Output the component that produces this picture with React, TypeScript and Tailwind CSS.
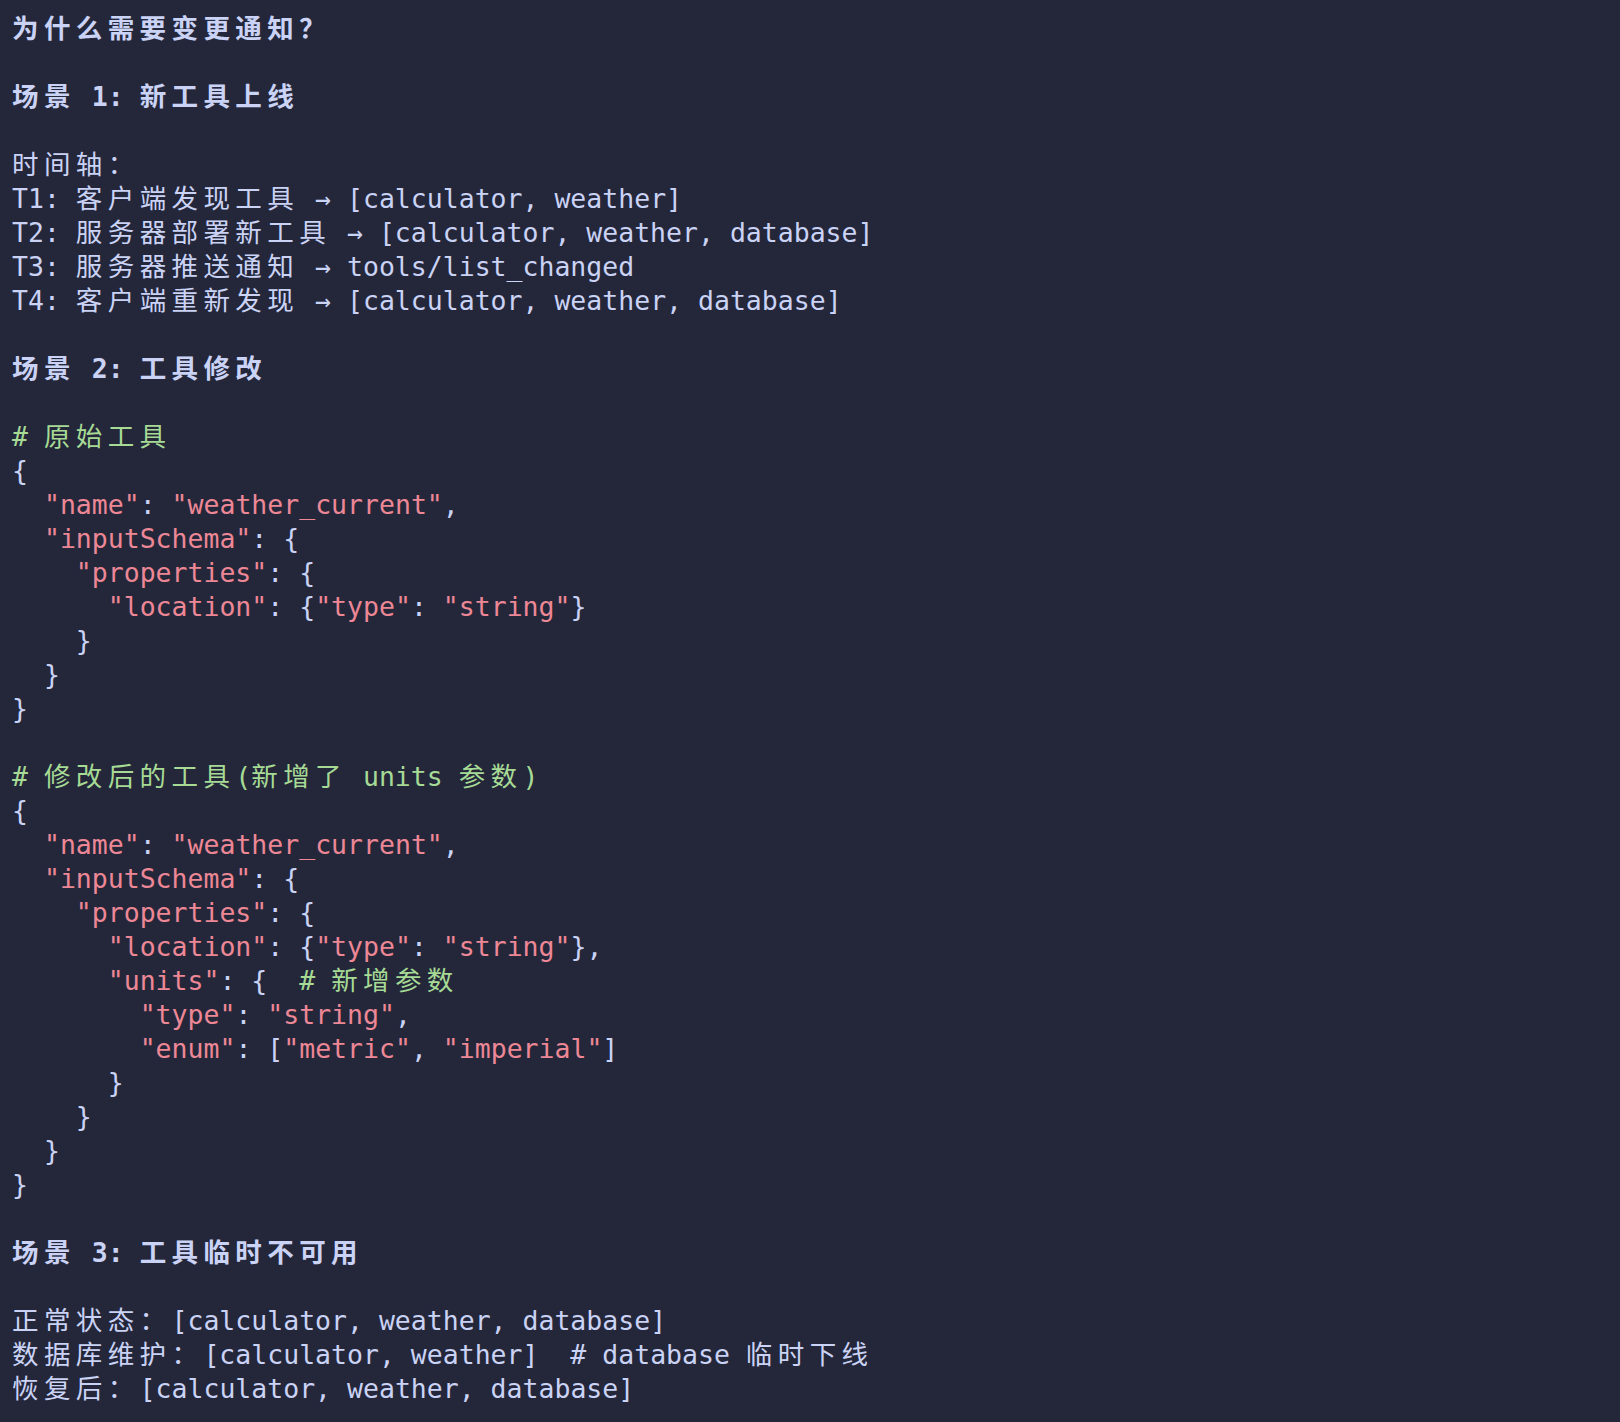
import React from 'react';

type Tone = 't' | 's' | 'c';
type Seg = [Tone, string];
type Line = { segs: Seg[]; bold?: boolean } | null;

const toneClass: Record<Tone, string> = {
  t: 'text-[#cad3f5]',
  s: 'text-[#ed8796]',
  c: 'text-[#a6da95]',
};

const t = (x: string): Seg => ['t', x];
const s = (x: string): Seg => ['s', x];
const c = (x: string): Seg => ['c', x];

const lines: Line[] = [
  { segs: [t('为什么需要变更通知？')], bold: true },
  null,
  { segs: [t('场景 1: 新工具上线')], bold: true },
  null,
  { segs: [t('时间轴：')] },
  { segs: [t('T1: 客户端发现工具 → [calculator, weather]')] },
  { segs: [t('T2: 服务器部署新工具 → [calculator, weather, database]')] },
  { segs: [t('T3: 服务器推送通知 → tools/list_changed')] },
  { segs: [t('T4: 客户端重新发现 → [calculator, weather, database]')] },
  null,
  { segs: [t('场景 2: 工具修改')], bold: true },
  null,
  { segs: [c('# 原始工具')] },
  { segs: [t('{')] },
  { segs: [t('  '), s('"name"'), t(': '), s('"weather_current"'), t(',')] },
  { segs: [t('  '), s('"inputSchema"'), t(': {')] },
  { segs: [t('    '), s('"properties"'), t(': {')] },
  { segs: [t('      '), s('"location"'), t(': {'), s('"type"'), t(': '), s('"string"'), t('}')] },
  { segs: [t('    }')] },
  { segs: [t('  }')] },
  { segs: [t('}')] },
  null,
  { segs: [c('# 修改后的工具(新增了 units 参数)')] },
  { segs: [t('{')] },
  { segs: [t('  '), s('"name"'), t(': '), s('"weather_current"'), t(',')] },
  { segs: [t('  '), s('"inputSchema"'), t(': {')] },
  { segs: [t('    '), s('"properties"'), t(': {')] },
  { segs: [t('      '), s('"location"'), t(': {'), s('"type"'), t(': '), s('"string"'), t('},')] },
  { segs: [t('      '), s('"units"'), t(': {  '), c('# 新增参数')] },
  { segs: [t('        '), s('"type"'), t(': '), s('"string"'), t(',')] },
  { segs: [t('        '), s('"enum"'), t(': ['), s('"metric"'), t(', '), s('"imperial"'), t(']')] },
  { segs: [t('      }')] },
  { segs: [t('    }')] },
  { segs: [t('  }')] },
  { segs: [t('}')] },
  null,
  { segs: [t('场景 3: 工具临时不可用')], bold: true },
  null,
  { segs: [t('正常状态：[calculator, weather, database]')] },
  { segs: [t('数据库维护：[calculator, weather]  # database 临时下线')] },
  { segs: [t('恢复后：[calculator, weather, database]')] },
];

// wide (CJK / fullwidth) runs take two monospace cells
const WIDE = /([\u3000-\u9fff\uff00-\uffef]+)/;

function Cells({ text }: { text: string }) {
  const parts = text.split(WIDE).filter((p) => p.length > 0);
  return (
    <>
      {parts.map((p, i) =>
        WIDE.test(p) ? (
          <span key={i} className="tracking-[5.4px]">
            {p}
          </span>
        ) : (
          <span key={i}>{p}</span>
        )
      )}
    </>
  );
}

export default function App() {
  return (
    <div className="min-h-screen w-full bg-[#24273a] pl-3 pt-3 font-['DejaVu_Sans_Mono','Noto_Sans_CJK_SC',monospace] text-[26.5px] leading-[34px] whitespace-pre">
      {lines.map((line, i) =>
        line === null ? (
          <div key={i} className="h-[34px]" />
        ) : (
          <div key={i} className={line.bold ? 'font-bold' : 'font-normal'}>
            {line.segs.map(([tone, txt], j) => (
              <span key={j} className={toneClass[tone]}>
                <Cells text={txt} />
              </span>
            ))}
          </div>
        )
      )}
    </div>
  );
}
